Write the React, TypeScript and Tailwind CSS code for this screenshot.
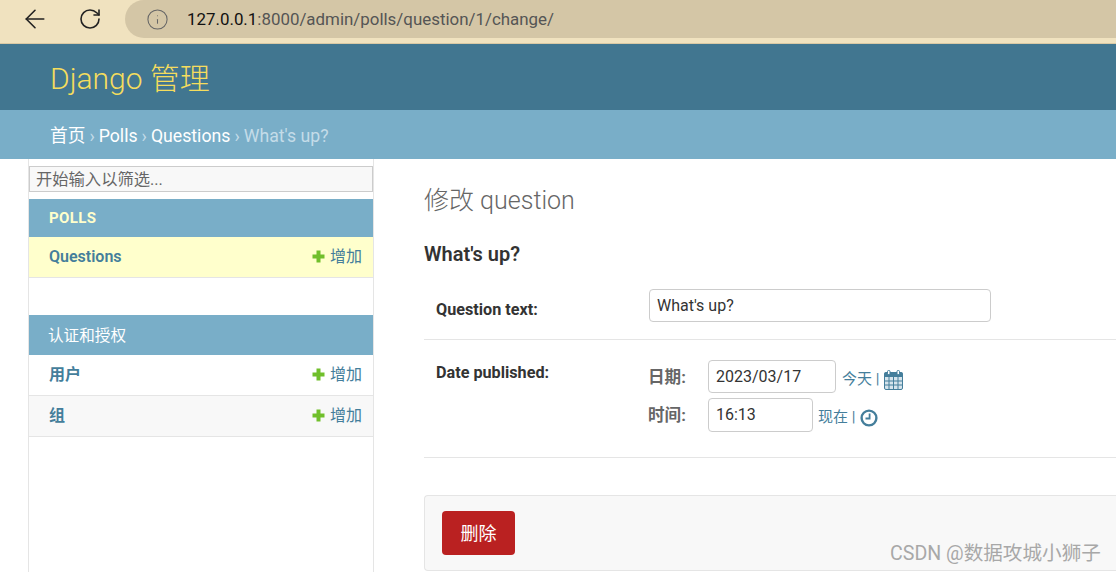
import { ArrowLeft, RotateCw, Info } from "lucide-react";

const font = { fontFamily: 'Roboto, "Noto Sans CJK SC", sans-serif' };

function AddLink() {
  return (
    <span className="flex items-center gap-[5px] text-[16px] text-[#447e9b]">
      <svg width="13" height="13" viewBox="0 0 13 13" className="mb-[2px]">
        <path d="M4.5 0.5h4v4h4v4h-4v4h-4v-4h-4v-4h4z" fill="#70bf2b" />
      </svg>
      增加
    </span>
  );
}

function ModelRow({ name, className }: { name: string; className: string }) {
  return (
    <div className={`flex items-center justify-between border-b border-[#e5e5e5] pl-5 pr-[11px] ${className}`}>
      <span className="text-[16px] font-semibold text-[#447e9b]">{name}</span>
      <AddLink />
    </div>
  );
}

function Sidebar() {
  return (
    <aside className="ml-[28px] flex w-[346px] shrink-0 flex-col border-x border-[#e5e5e5] pt-[7px]">
      <div className="flex h-[26px] items-center border border-[#cccccc] bg-[#f8f8f8] pl-[6px] pt-[2px] text-[16.3px] text-[#666]">
        开始输入以筛选...
      </div>
      <div className="mt-[7px] flex h-[38px] items-center bg-[#79aec8] pl-5 text-[15px] font-bold tracking-[0.4px] text-[#ffffcc]">
        POLLS
      </div>
      <ModelRow name="Questions" className="h-[41px] bg-[#ffffcc]" />
      <div className="mt-[37px] flex h-[40px] items-center bg-[#79aec8] pl-[19px] pt-[3px] text-[15.6px] text-white">
        认证和授权
      </div>
      <ModelRow name="用户" className="h-[41px] bg-white" />
      <ModelRow name="组" className="h-[41px] bg-[#f8f8f8]" />
    </aside>
  );
}

function CalendarIcon() {
  return (
    <svg width="19" height="20" viewBox="0 0 19 20" className="ml-[5px]">
      <rect x="0.5" y="2.5" width="18" height="17" rx="1.5" fill="#d6e4ec" stroke="#447e9b" />
      <rect x="0.5" y="2.5" width="18" height="4.5" fill="#447e9b" />
      <rect x="3.5" y="0.5" width="2.5" height="4" rx="1" fill="#fff" stroke="#447e9b" />
      <rect x="13" y="0.5" width="2.5" height="4" rx="1" fill="#fff" stroke="#447e9b" />
      <path d="M1 11h17M1 15h17M5 7v12M9.5 7v12M14 7v12" stroke="#447e9b" strokeWidth="1" />
    </svg>
  );
}

function ClockIcon() {
  return (
    <svg width="18" height="18" viewBox="0 0 18 18" className="ml-[5px] mt-[2px]">
      <circle cx="9" cy="9" r="7.4" fill="#fff" stroke="#447e9b" strokeWidth="2.4" />
      <path d="M9.6 4.5v5H5.5" fill="none" stroke="#447e9b" strokeWidth="1.8" />
    </svg>
  );
}

function Main() {
  return (
    <main className="ml-[50px] flex-1 pt-[26px]">
      <h1 className="text-[25px] font-light leading-[32px] text-[#666]">修改 question</h1>
      <h2 className="mt-[23px] text-[20px] font-semibold leading-[28px] text-[#333]">What's up?</h2>

      <div className="mt-[6px] flex h-[66px] border-b border-[#e5e5e5] pl-3">
        <div className="w-[213px] pt-[26px] text-[16.2px] font-bold leading-[20px] text-[#333]">Question text:</div>
        <div className="pt-[15px]">
          <div className="flex h-[33px] w-[342px] items-center rounded border border-[#cccccc] pl-[7px] text-[16px] text-[#333]">
            What's up?
          </div>
        </div>
      </div>

      <div className="flex h-[118px] border-b border-[#e5e5e5] pl-3">
        <div className="w-[213px] pt-[23px] text-[16.2px] font-bold leading-[20px] text-[#333]">Date published:</div>
        <div className="flex flex-col gap-[5px] pt-[20px] text-[15px] text-[#447e9b]">
          <div className="flex h-[33px] items-center">
            <span className="-ml-[1px] mt-[4px] w-[60px] text-[16.6px] font-bold text-[#666]">日期:</span>
            <div className="flex h-[33px] w-[128px] items-center rounded border border-[#cccccc] pl-[7px] text-[16px] text-[#333]">
              2023/03/17
            </div>
            <span className="ml-[6px] mt-[6px] flex items-center">今天 | <CalendarIcon /></span>
          </div>
          <div className="flex h-[34px] items-center">
            <span className="-ml-[1px] mt-[2px] w-[60px] text-[16.6px] font-bold text-[#666]">时间:</span>
            <div className="flex h-[34px] w-[105px] items-center rounded border border-[#cccccc] pl-[7px] text-[16px] text-[#333]">
              16:13
            </div>
            <span className="ml-[5px] mt-[4px] flex items-center">现在 | <ClockIcon /></span>
          </div>
        </div>
      </div>

      <div className="mt-[37px] flex h-[76px] items-center rounded-l border border-r-0 border-[#e5e5e5] bg-[#f8f8f8] pl-[17px]">
        <div className="flex h-[44px] w-[73px] items-center justify-center rounded bg-[#ba2121] text-[18px] text-white">
          删除
        </div>
      </div>
    </main>
  );
}

export default function App() {
  return (
    <div className="relative h-[572px] w-[1116px] overflow-hidden bg-white" style={font}>
      <div className="flex h-[44px] items-start border-b border-[#d9c9a5] bg-[#f0e2bf]">
        <ArrowLeft size={30} strokeWidth={1.3} className="ml-[20px] mt-[4px] text-[#222]" />
        <RotateCw size={24} strokeWidth={1.6} className="ml-[28px] mt-[7px] text-[#222]" />
        <div className="ml-[23px] flex h-[38px] flex-1 items-center rounded-l-[19px] bg-[#d4c6a6] pl-[21px]">
          <Info size={23} strokeWidth={1.1} className="text-[#666]" />
          <span className="ml-[18px] mt-[1px] text-[16.9px] text-[#555]">
            <span className="text-[#111]">127.0.0.1</span>:8000/admin/polls/question/1/change/
          </span>
        </div>
      </div>

      <div className="flex h-[66px] items-center bg-[#417690] pl-[50px] pt-[2px] text-[30px] font-light text-[#f5dd5d]">
        Django 管理
      </div>

      <div className="flex h-[49px] items-center bg-[#79aec8] pl-[50px] pt-[4px] text-[17.7px] text-[#c4dce8]">
        <span className="text-white">首页</span>
        <span className="mx-[4px]">›</span>
        <span className="text-white">Polls</span>
        <span className="mx-[4px]">›</span>
        <span className="text-white">Questions</span>
        <span className="mx-[4px]">›</span>
        <span>What's up?</span>
      </div>

      <div className="flex h-[413px]">
        <Sidebar />
        <Main />
      </div>

      <span className="absolute left-[890px] top-[539px] text-[19.6px] text-[#a8a8a8]">CSDN @数据攻城小狮子</span>
    </div>
  );
}
